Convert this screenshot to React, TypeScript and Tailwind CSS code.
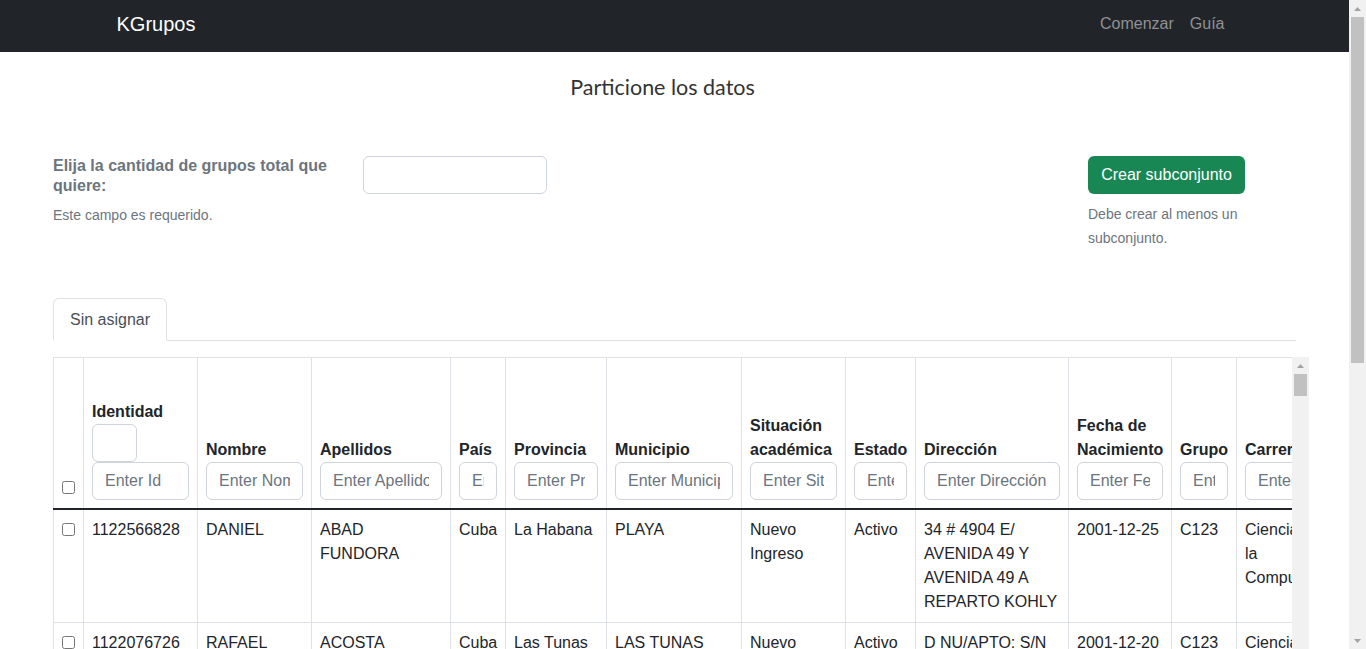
import React from 'react';

type Estudiante = {
  id: string;
  nombre: string;
  apellidos: string;
  pais: string;
  provincia: string;
  municipio: string;
  situacion: string;
  estado: string;
  direccion: string;
  nacimiento: string;
  grupo: string;
  carrera: string;
  sexo: string;
  anio: string;
};

const MUESTRA: Estudiante[] = [
  {
    id: '1122566828', nombre: 'DANIEL', apellidos: 'ABAD FUNDORA', pais: 'Cuba', provincia: 'La Habana',
    municipio: 'PLAYA', situacion: 'Nuevo Ingreso', estado: 'Activo',
    direccion: '34 # 4904 E/ AVENIDA 49 Y AVENIDA 49 A REPARTO KOHLY', nacimiento: '2001-12-25',
    grupo: 'C123', carrera: 'Ciencias de la Computación', sexo: 'M', anio: '1',
  },
  {
    id: '1122076726', nombre: 'RAFAEL', apellidos: 'ACOSTA RODRIGUEZ', pais: 'Cuba', provincia: 'Las Tunas',
    municipio: 'LAS TUNAS', situacion: 'Nuevo Ingreso', estado: 'Activo',
    direccion: 'D NU/APTO: S/N REPARTO SANTOS', nacimiento: '2001-12-20',
    grupo: 'C123', carrera: 'Ciencias de la Computación', sexo: 'M', anio: '1',
  },
  {
    id: '1203146582', nombre: 'LAURA', apellidos: 'ALFONSO PEREZ', pais: 'Cuba', provincia: 'La Habana',
    municipio: 'PLAZA', situacion: 'Nuevo Ingreso', estado: 'Activo',
    direccion: 'CALLE 23 # 1056 E/ 12 Y 14 VEDADO', nacimiento: '2002-03-14',
    grupo: 'C121', carrera: 'Ciencias de la Computación', sexo: 'F', anio: '1',
  },
  {
    id: '1109254471', nombre: 'ERNESTO', apellidos: 'BETANCOURT LEON', pais: 'Cuba', provincia: 'Matanzas',
    municipio: 'CARDENAS', situacion: 'Nuevo Ingreso', estado: 'Activo',
    direccion: 'CALLE REAL # 412 E/ SOL Y LUNA', nacimiento: '2001-09-25',
    grupo: 'C122', carrera: 'Ciencias de la Computación', sexo: 'M', anio: '1',
  },
];

const FILAS: Estudiante[] = Array.from({ length: 8 }, (_, i) => MUESTRA[i % MUESTRA.length]);

const COLUMNAS: { titulo: string; ph: string; ancho: number }[] = [
  { titulo: 'Identidad', ph: 'Enter Id', ancho: 114 },
  { titulo: 'Nombre', ph: 'Enter Nombre', ancho: 114 },
  { titulo: 'Apellidos', ph: 'Enter Apellidos', ancho: 139 },
  { titulo: 'País', ph: 'Enter País', ancho: 55 },
  { titulo: 'Provincia', ph: 'Enter Provincia', ancho: 101 },
  { titulo: 'Municipio', ph: 'Enter Municipio', ancho: 135 },
  { titulo: 'Situación académica', ph: 'Enter Situación', ancho: 104 },
  { titulo: 'Estado', ph: 'Enter Estado', ancho: 70 },
  { titulo: 'Dirección', ph: 'Enter Dirección', ancho: 153 },
  { titulo: 'Fecha de Nacimiento', ph: 'Enter Fecha', ancho: 103 },
  { titulo: 'Grupo', ph: 'Enter Grupo', ancho: 65 },
  { titulo: 'Carrera', ph: 'Enter Carrera', ancho: 112 },
  { titulo: 'Sexo', ph: 'Enter Sexo', ancho: 70 },
  { titulo: 'Año', ph: 'Enter Año', ancho: 70 },
];

const td = 'border border-[#dee2e6] px-2 py-2 align-top';

// flechitas de la barra de desplazamiento
function Flecha({ abajo = false }: { abajo?: boolean }) {
  return (
    <svg width="7" height="4" viewBox="0 0 7 4" className="block">
      <path d={abajo ? 'M0 0h7L3.5 4z' : 'M3.5 0L7 4H0z'} fill="#a3a3a3" />
    </svg>
  );
}

function Navbar() {
  return (
    <nav className="h-[52px] bg-[#212529]">
      <div className="mx-auto flex h-full w-[1140px] items-center justify-between px-3 pb-1">
        <span className="text-[20px] text-white">KGrupos</span>
        <div className="flex">
          <a className="px-2 text-[16px] text-[#8f9193]">Comenzar</a>
          <a className="px-2 text-[16px] text-[#8f9193]">Guía</a>
        </div>
      </div>
    </nav>
  );
}

function Formulario() {
  return (
    <div className="mt-[54px] flex items-start justify-between">
      <div className="flex items-start">
        <div className="w-[290px]">
          <label className="block text-[16px] font-bold leading-[20px] text-[#6c757d]">
            Elija la cantidad de grupos total que quiere:
          </label>
          <p className="mt-[9px] text-[14px] leading-[20px] text-[#6c757d]">Este campo es requerido.</p>
        </div>
        <input
          type="number"
          className="ml-[20px] h-[38px] w-[184px] rounded-md border border-[#ced4da] px-3 text-[16px] outline-none"
        />
      </div>
      <div className="mr-[51px] w-[157px]">
        <button className="h-[38px] w-[157px] rounded-md bg-[#198754] text-[16px] text-white">
          Crear subconjunto
        </button>
        <p className="mt-[8px] text-[14px] leading-[24px] text-[#6c757d]">Debe crear al menos un subconjunto.</p>
      </div>
    </div>
  );
}

function Tabla() {
  const total = 30 + COLUMNAS.reduce((s, c) => s + c.ancho, 0);
  return (
    <div className="mt-4 flex h-[740px] w-[1256px]">
      <div className="w-[1239px] overflow-hidden">
        <table className="table-fixed border-collapse text-[16px] text-[#212529]" style={{ width: total }}>
          <colgroup>
            <col style={{ width: 30 }} />
            {COLUMNAS.map((c) => (
              <col key={c.titulo} style={{ width: c.ancho }} />
            ))}
          </colgroup>
          <thead>
            <tr>
              <th className="h-[151px] border border-b-2 border-[#dee2e6] border-b-[#212529] px-2 pb-[14px] align-bottom">
                <input type="checkbox" className="block h-[13px] w-[13px]" />
              </th>
              {COLUMNAS.map((c, i) => (
                <th
                  key={c.titulo}
                  className="border border-b-2 border-[#dee2e6] border-b-[#212529] px-2 pb-2 text-left align-bottom font-bold leading-[24px]"
                >
                  <div>{c.titulo}</div>
                  {i === 0 && <div className="h-[38px] w-[45px] rounded-md border border-[#ced4da]" />}
                  <input
                    placeholder={c.ph}
                    className="block h-[38px] w-full rounded-md border border-[#ced4da] px-3 text-[16px] font-normal outline-none placeholder:text-[#6c757d]"
                  />
                </th>
              ))}
            </tr>
          </thead>
          <tbody className="leading-[24px]">
            {FILAS.map((f, i) => (
              <tr key={i}>
                <td className={td}>
                  <input type="checkbox" className="mt-[5px] block h-[13px] w-[13px]" />
                </td>
                <td className={td}>{f.id}</td>
                <td className={td}>{f.nombre}</td>
                <td className={td}>{f.apellidos}</td>
                <td className={td}>{f.pais}</td>
                <td className={td}>{f.provincia}</td>
                <td className={td}>{f.municipio}</td>
                <td className={td}>{f.situacion}</td>
                <td className={td}>{f.estado}</td>
                <td className={td}>{f.direccion}</td>
                <td className={td}>{f.nacimiento}</td>
                <td className={td}>{f.grupo}</td>
                <td className={td}>{f.carrera}</td>
                <td className={td}>{f.sexo}</td>
                <td className={td}>{f.anio}</td>
              </tr>
            ))}
          </tbody>
        </table>
      </div>
      {/* barra vertical de la tabla */}
      <div className="flex w-[17px] flex-col items-center bg-[#f1f1f1]">
        <div className="flex h-[17px] items-center justify-center">
          <Flecha />
        </div>
        <div className="h-[22px] w-[13px] bg-[#c1c1c1]" />
      </div>
    </div>
  );
}

export default function App() {
  return (
    <div className="flex h-screen overflow-hidden bg-white font-['Liberation_Sans',Arial,sans-serif] text-[#212529]">
      <div className="h-full w-[1349px] shrink-0 overflow-hidden">
        <Navbar />
        <main className="px-[53px] pb-12">
          <h4 className="pr-[24px] pt-[20px] text-center font-['Lato',sans-serif] text-[21.5px] leading-[30px] text-[#333]">
            Particione los datos
          </h4>
          <Formulario />
          <div className="mt-[48px] flex border-b border-[#dee2e6]">
            <button className="-mb-px h-[43px] rounded-t-md border border-[#dee2e6] border-b-white bg-white px-4 text-[16px] text-[#495057]">
              Sin asignar
            </button>
          </div>
          <Tabla />
        </main>
      </div>
      {/* barra vertical de la página */}
      <div className="flex h-full w-[17px] flex-col items-center bg-[#f1f1f1]">
        <div className="flex h-[17px] items-center justify-center">
          <Flecha />
        </div>
        <div className="h-[346px] w-[13px] bg-[#c1c1c1]" />
        <div className="flex-1" />
        <div className="flex h-[17px] items-center justify-center">
          <Flecha abajo />
        </div>
      </div>
    </div>
  );
}
